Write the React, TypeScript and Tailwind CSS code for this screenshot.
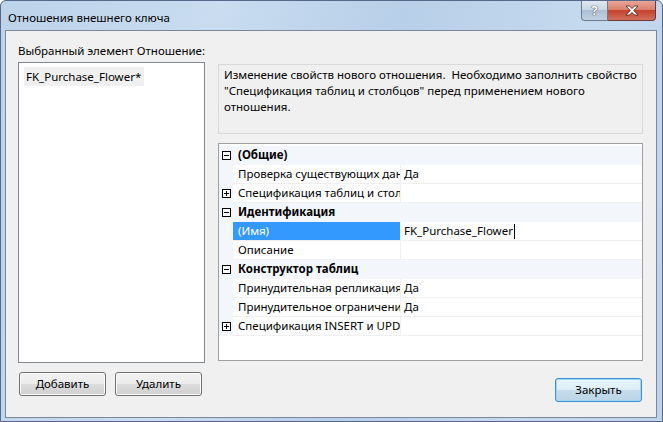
import React from 'react';

const FONT = { fontFamily: '"Noto Sans", "Open Sans", sans-serif' };

function Box({ open }: { open: boolean }) {
  return (
    <svg width="9" height="9" viewBox="0 0 9 9" className="block">
      <rect x="0.5" y="0.5" width="8" height="8" fill="#fff" stroke="#000" />
      <path d="M2 4.5h5" stroke="#000" />
      {!open && <path d="M4.5 2v5" stroke="#000" />}
    </svg>
  );
}

function Category({ label }: { label: string }) {
  return (
    <div className="flex h-[19px] items-center bg-[#f3f6fb] border-b border-[#f3f6fb]">
      <div className="flex w-[14px] justify-center pl-[1px]">
        <Box open />
      </div>
      <div className="pl-[5px] font-bold text-black">{label}</div>
    </div>
  );
}

function Prop({
  name,
  value,
  expandable,
  selected,
  editing,
}: {
  name: string;
  value?: string;
  expandable?: boolean;
  selected?: boolean;
  editing?: boolean;
}) {
  return (
    <div className="flex h-[19px] bg-[#f3f6fb]">
      <div className="flex w-[14px] shrink-0 items-center justify-center pl-[1px]">
        {expandable && <Box open={false} />}
      </div>
      <div
        className={
          selected
            ? 'flex w-[167px] shrink-0 items-center overflow-hidden whitespace-nowrap bg-[#3399ff] pl-[5px] text-white border-b border-[#f0f0f0]'
            : 'flex w-[167px] shrink-0 items-center overflow-hidden whitespace-nowrap bg-white pl-[5px] text-black border-b border-[#f0f0f0]'
        }
      >
        {name}
      </div>
      <div className="w-px shrink-0 bg-[#f0f0f0]" />
      <div className="flex flex-1 items-center whitespace-nowrap bg-white pl-[3px] text-black border-b border-[#f0f0f0]">
        {value}
        {editing && <span className="ml-[1px] inline-block h-[15px] w-px bg-black" />}
      </div>
    </div>
  );
}

function WinButton({ label, focused }: { label: string; focused?: boolean }) {
  return (
    <div
      className={
        focused
          ? 'flex h-[24px] w-[87px] items-center justify-center rounded-[3px] border border-[#3c8fd0] bg-[linear-gradient(#e9f5fc_0%,#dcedf7_50%,#c5dceb_51%,#bcd4e6_100%)] text-black shadow-[inset_0_0_0_1px_#9ed8f6]'
          : 'flex h-[24px] w-[87px] items-center justify-center rounded-[3px] border border-[#707070] bg-[linear-gradient(#f2f2f2_0%,#ebebeb_50%,#dddddd_51%,#cfcfcf_100%)] text-black shadow-[inset_0_0_0_1px_#fcfcfc]'
      }
    >
      {label}
    </div>
  );
}

export default function App() {
  return (
    <div
      className="flex h-[422px] w-[663px] flex-col overflow-hidden rounded-t-[6px] border border-[#56698a] bg-[linear-gradient(100deg,#bcd3ea_0%,#c9dcf0_30%,#b7cfe8_55%,#c5d9ee_80%,#bed4eb_100%)] text-[11.5px] leading-[16px]"
      style={FONT}
    >
      {/* title bar */}
      <div className="flex h-[29px] shrink-0 items-start justify-between">
        <div className="pl-[7px] pt-[9px] text-black">Отношения внешнего ключа</div>
        <div className="mr-[6px] flex">
          <div className="flex h-[20px] w-[27px] items-center justify-center rounded-bl-[4px] border border-t-0 border-[#6d7b8e] bg-[linear-gradient(#dfe8f2_0%,#c9d6e5_45%,#aebfd3_50%,#c2d2e3_100%)]">
            <span className="text-[13px] font-bold leading-none text-white [text-shadow:0_0_1px_#333,0_0_1px_#333]">
              ?
            </span>
          </div>
          <div className="flex h-[20px] w-[48px] items-center justify-center rounded-br-[4px] border border-l-0 border-t-0 border-[#6d3a32] bg-[linear-gradient(#e8a597_0%,#d9826f_45%,#c4412c_50%,#d0705d_100%)]">
            <svg width="14" height="11" viewBox="0 0 14 11">
              <path
                d="M1 1h3.5L7 3.6 9.5 1H13L8.8 5.5 13 10H9.5L7 7.4 4.5 10H1l4.2-4.5z"
                fill="#fff"
                stroke="#4a1a12"
                strokeWidth="0.8"
                strokeLinejoin="round"
              />
            </svg>
          </div>
        </div>
      </div>

      {/* client area */}
      <div className="mb-[3px] ml-[4px] mr-[5px] flex flex-1 border border-[#7a8899] bg-[#f0f0f0] pl-[12px]">
        {/* left column */}
        <div className="flex w-[187px] shrink-0 flex-col">
          <div className="mt-[12px] h-[16px] whitespace-nowrap text-black">Выбранный элемент Отношение:</div>
          <div className="mt-[3px] h-[301px] border border-[#828790] bg-white p-[4px] pl-[5px]">
            <div className="inline-block bg-[#f0f0f0] pl-[2px] pr-[3px] leading-[19px] text-black">
              FK_Purchase_Flower*
            </div>
          </div>
          <div className="mt-[9px] flex gap-[9px] pl-[1px]">
            <WinButton label="Добавить" />
            <WinButton label="Удалить" />
          </div>
        </div>

        {/* right column */}
        <div className="ml-[13px] flex w-[425px] shrink-0 flex-col">
          <div className="mt-[33px] h-[70px] border border-[#d9d9d9] bg-[#f0f0f0] px-[5px] pt-[2px] text-black">
            <div className="whitespace-pre">Изменение свойств нового отношения.  Необходимо заполнить свойство</div>
            <div>"Спецификация таблиц и столбцов" перед применением нового</div>
            <div>отношения.</div>
          </div>
          <div className="mt-[9px] h-[218px] border border-[#a0a0a0] bg-white pt-[2px]">
            <Category label="(Общие)" />
            <Prop name="Проверка существующих данных" value="Да" />
            <Prop name="Спецификация таблиц и столбцов" expandable />
            <Category label="Идентификация" />
            <Prop name="(Имя)" value="FK_Purchase_Flower" selected editing />
            <Prop name="Описание" />
            <Category label="Конструктор таблиц" />
            <Prop name="Принудительная репликация" value="Да" />
            <Prop name="Принудительное ограничение внешнего ключа" value="Да" />
            <Prop name="Спецификация INSERT и UPDATE" expandable />
          </div>
          <div className="mt-[17px] flex justify-end pr-[1px]">
            <WinButton label="Закрыть" focused />
          </div>
        </div>
      </div>
    </div>
  );
}
